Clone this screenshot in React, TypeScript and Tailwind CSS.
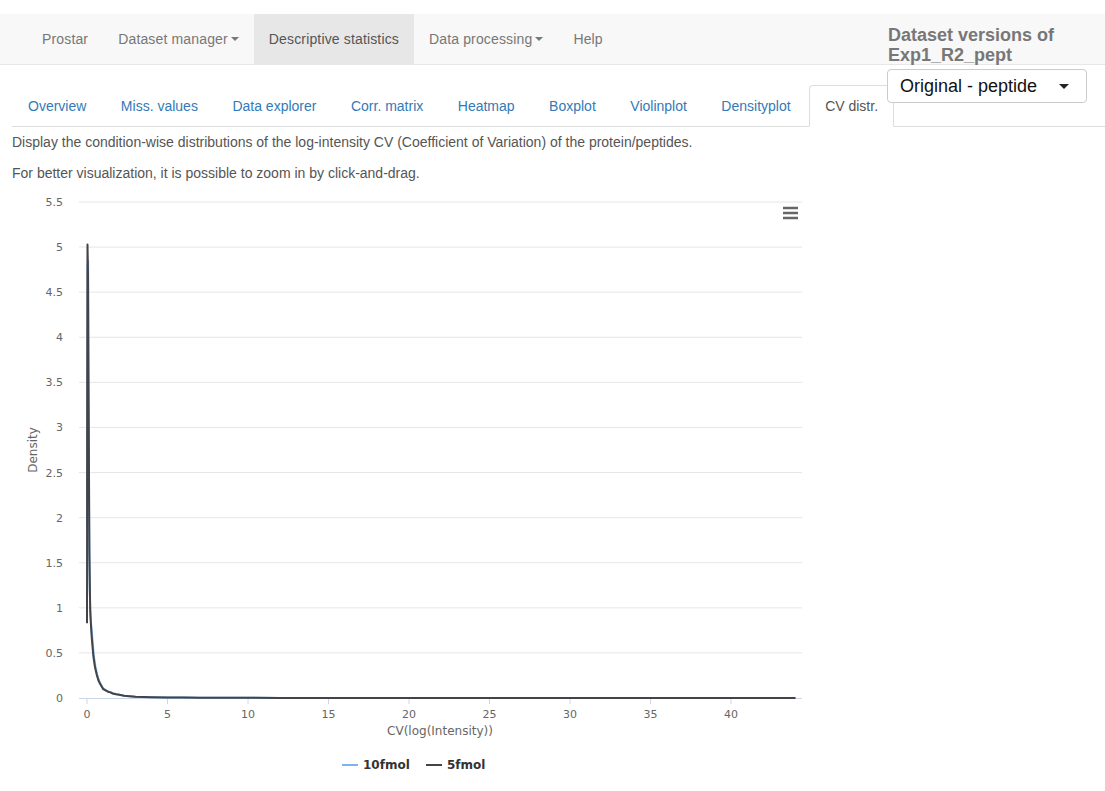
import React from 'react';

const navItems = [
    { label: 'Prostar', caret: false, active: false },
    { label: 'Dataset manager', caret: true, active: false },
    { label: 'Descriptive statistics', caret: false, active: true },
    { label: 'Data processing', caret: true, active: false },
    { label: 'Help', caret: false, active: false },
];

const tabs = ['Overview', 'Miss. values', 'Data explorer', 'Corr. matrix', 'Heatmap', 'Boxplot', 'Violinplot', 'Densityplot', 'CV distr.'];

// chart geometry, in page pixels
const X0 = 87;
const XU = 16.1;
const Y0 = 698;
const YU = 90.18;
const px = (x: number) => X0 + x * XU;
const py = (y: number) => Y0 - y * YU;

const tail: [number, number][] = [
    [0.3, 0.66], [0.4, 0.46], [0.5, 0.34], [0.6, 0.26], [0.7, 0.2], [0.8, 0.16], [0.9, 0.13], [1.0, 0.1],
    [1.15, 0.085], [1.3, 0.07], [1.45, 0.062], [1.6, 0.05], [1.8, 0.042], [2.0, 0.035], [2.3, 0.025],
    [2.6, 0.02], [3.0, 0.013], [3.5, 0.01], [4, 0.008], [5, 0.006], [6, 0.004], [7, 0.003], [8, 0.003],
    [10, 0.002], [12, 0.0015], [15, 0.001], [20, 0.0006], [30, 0.0003], [44, 0],
];

const blackData: [number, number][] = [
    [0, 0.83], [0.015, 3.2], [0.03, 5.03], [0.06, 4.7], [0.09, 3.6], [0.12, 2.7], [0.15, 1.6], [0.2, 0.98], [0.25, 0.8],
    ...tail,
];

const blueData: [number, number][] = [
    [0, 1.9], [0.02, 3.6], [0.04, 4.8], [0.07, 4.85], [0.1, 3.55], [0.13, 2.0], [0.17, 1.2], [0.22, 0.9],
    ...tail.map(([x, y]) => [x + 0.02, y * 1.03] as [number, number]),
];

const toPath = (d: [number, number][]) =>
    d.map(([x, y], i) => `${i === 0 ? 'M' : 'L'}${px(x).toFixed(1)},${py(y).toFixed(1)}`).join(' ');

function Caret() {
    return <span className="inline-block ml-[3px] align-middle border-t-[4px] border-t-current border-x-[4px] border-x-transparent" />;
}

function CvChart() {
    const yTicks = [0, 0.5, 1, 1.5, 2, 2.5, 3, 3.5, 4, 4.5, 5, 5.5];
    const xTicks = [0, 5, 10, 15, 20, 25, 30, 35, 40];
    const font = '"Lucida Grande", "DejaVu Sans", Verdana, sans-serif';
    return (
        <svg width={820} height={600} viewBox="12 190 820 600" className="block" style={{ fontFamily: font }}>
            {yTicks.map((t) => (
                <g key={t}>
                    {t > 0 && <line x1={79} x2={802} y1={py(t)} y2={py(t)} stroke="#e6e6e6" strokeWidth={1} />}
                    <text x={63} y={py(t) + 4} textAnchor="end" fontSize={11} fill="#666">
                        {t}
                    </text>
                </g>
            ))}
            <line x1={79} x2={802} y1={Y0 + 0.5} y2={Y0 + 0.5} stroke="#ccd6eb" strokeWidth={1} />
            {xTicks.map((t) => (
                <g key={t}>
                    <line x1={px(t)} x2={px(t)} y1={Y0} y2={Y0 + 6} stroke="#ccd6eb" strokeWidth={1} />
                    <text x={px(t)} y={718} textAnchor="middle" fontSize={11} fill="#666">
                        {t}
                    </text>
                </g>
            ))}
            <text x={440} y={735} textAnchor="middle" fontSize={12} fill="#666">
                CV(log(Intensity))
            </text>
            <text x={37} y={450} textAnchor="middle" fontSize={12} fill="#666" transform="rotate(-90 37 450)">
                Density
            </text>
            <path d={toPath(blueData)} fill="none" stroke="#7cb5ec" strokeWidth={2} strokeLinejoin="round" />
            <path d={toPath(blackData)} fill="none" stroke="#434348" strokeWidth={2} strokeLinejoin="round" />
            {/* context menu */}
            <g stroke="#666" strokeWidth={2.5}>
                <line x1={783} x2={798} y1={208} y2={208} />
                <line x1={783} x2={798} y1={213} y2={213} />
                <line x1={783} x2={798} y1={218} y2={218} />
            </g>
            {/* legend */}
            <line x1={342} x2={358} y1={765} y2={765} stroke="#7cb5ec" strokeWidth={2} />
            <text x={363} y={769} fontSize={12} fontWeight="bold" fill="#333">
                10fmol
            </text>
            <line x1={426} x2={442} y1={765} y2={765} stroke="#434348" strokeWidth={2} />
            <text x={447} y={769} fontSize={12} fontWeight="bold" fill="#333">
                5fmol
            </text>
        </svg>
    );
}

export default function App() {
    return (
        <div className="relative min-h-[791px] bg-white text-[14px] text-[#333] font-['Liberation_Sans',Arial,sans-serif]">
            <div className="h-[14px]" />
            <nav className="flex h-[51px] bg-[#f8f8f8] border-b border-[#e7e7e7] pl-[27px]">
                {navItems.map((it) => (
                    <div
                        key={it.label}
                        className={`flex items-center px-[15px] tracking-[0.15px] ${it.active ? 'bg-[#e7e7e7] text-[#555]' : 'text-[#777]'}`}
                    >
                        {it.label}
                        {it.caret && <Caret />}
                    </div>
                ))}
            </nav>

            {/* dataset version picker, floats over the navbar and tabs */}
            <div className="absolute left-[887px] top-[25px] w-[200px]">
                <div className="text-[18px] leading-[20px] font-bold text-[#777] pl-[1px]">
                    Dataset versions of
                    <br />
                    Exp1_R2_pept
                </div>
                <div className="mt-[4px] h-[34px] bg-white border border-[#ccc] rounded-[4px] flex items-center justify-between pl-[12px] pr-[17px] text-[18px] text-[#111]">
                    <span>Original - peptide</span>
                    <span className="border-t-[5px] border-t-[#222] border-x-[5px] border-x-transparent" />
                </div>
            </div>

            <div className="pl-[12px] pt-[20px]">
                <div className="flex border-b border-[#ddd]">
                    {tabs.map((t, i) => {
                        const active = i === tabs.length - 1;
                        return (
                            <div
                                key={t}
                                className={`mr-[2.5px] -mb-px px-[15px] py-[10px] leading-[20px] border rounded-t-[4px] ${
                                    active ? 'bg-white border-[#ddd] border-b-white text-[#555]' : 'border-transparent text-[#337ab7]'
                                }`}
                            >
                                {t}
                            </div>
                        );
                    })}
                </div>
                <p className="mt-[5px] mb-[11px] leading-[20px] text-[14px] text-[#555]">
                    Display the condition-wise distributions of the log-intensity CV (Coefficient of Variation) of the protein/peptides.
                </p>
                <p className="mb-[7px] leading-[20px] text-[14px] text-[#555]">
                    For better visualization, it is possible to zoom in by click-and-drag.
                </p>
                <CvChart />
            </div>
        </div>
    );
}
